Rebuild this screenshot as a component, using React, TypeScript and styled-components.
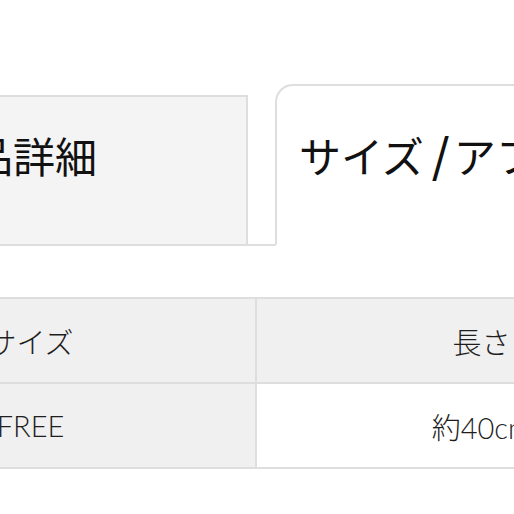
import styled, { createGlobalStyle } from "styled-components";

const GlobalStyle = createGlobalStyle`
  html, body {
    margin: 0;
    padding: 0;
    background: #ffffff;
    overflow: hidden;
  }
  body {
    width: 514px;
    height: 514px;
    font-family: "Lato", "Noto Sans CJK JP", sans-serif;
    color: #1a1a1a;
  }
`;

const Page = styled.div`
  width: 514px;
  height: 514px;
  overflow: hidden;
`;

const TabBar = styled.div`
  display: flex;
  align-items: flex-end;
  gap: 27px;
  margin-left: -95px;
  padding-top: 84px;
  width: 900px;
  border-bottom: 2px solid #dedede;
`;

const Tab = styled.div<{ $active?: boolean }>`
  box-sizing: border-box;
  margin-bottom: -2px;
  padding: ${(p) => (p.$active ? "48px" : "37px")} 22px 68px;
  width: ${(p) => (p.$active ? "500px" : "343px")};
  border: 2px solid #dedede;
  border-bottom-color: ${(p) => (p.$active ? "#ffffff" : "#dedede")};
  border-radius: ${(p) => (p.$active ? "18px 18px 0 0" : "0")};
  background: ${(p) => (p.$active ? "#ffffff" : "#f4f4f4")};
  font-family: "Noto Sans CJK JP", sans-serif;
  font-size: 42px;
  line-height: 1;
  white-space: nowrap;
  color: #111111;
`;

const Slash = styled.span`
  margin: 0 4px 0 8px;
  font-size: 46px;
  font-weight: 500;
  line-height: 0;
`;

const SizeTable = styled.table`
  margin-top: 51px;
  margin-left: -196px;
  width: 904px;
  border-collapse: collapse;
  table-layout: fixed;
`;

const Cell = styled.td<{ $shade?: boolean }>`
  height: 83px;
  padding: 0;
  border: 2px solid #dedede;
  background: ${(p) => (p.$shade ? "#f0f0f0" : "#ffffff")};
  text-align: center;
  vertical-align: middle;
  font-size: 29px;
  font-weight: 300;
  color: #1e1e1e;
  white-space: nowrap;
`;

const rows = [
  { label: "サイズ", value: "長さ", head: true },
  { label: "FREE", value: "約40cm", head: false },
];

export default function App() {
  return (
    <Page>
      <GlobalStyle />
      <TabBar>
        <Tab>商品詳細</Tab>
        <Tab $active>
          サイズ<Slash>/</Slash>アフターケア
        </Tab>
      </TabBar>
      <SizeTable>
        <tbody>
          {rows.map((r) => (
            <tr key={r.label}>
              <Cell $shade>{r.label}</Cell>
              <Cell $shade={r.head}>{r.value}</Cell>
            </tr>
          ))}
        </tbody>
      </SizeTable>
    </Page>
  );
}
